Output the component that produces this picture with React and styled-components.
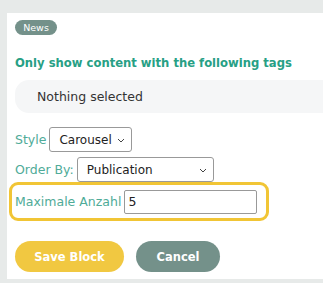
import React from 'react'
import styled, { createGlobalStyle } from 'styled-components'

const Global = createGlobalStyle`
  body {
    margin: 0;
    background: #e7eae9;
    font-family: "DejaVu Sans", "Open Sans", sans-serif;
  }
`

const Page = styled.div`
  padding: 13px 0 4px 7px;
  width: 323px;
  height: 283px;
  box-sizing: border-box;
  overflow: hidden;
`

const Card = styled.div`
  background: #fff;
  width: 340px;
  height: 266px;
  padding: 7px 0 0 8px;
  box-sizing: border-box;
`

const Badge = styled.div`
  background: #74918a;
  color: #fff;
  font-size: 9.5px;
  line-height: 15px;
  height: 15px;
  width: 42px;
  text-align: center;
  border-radius: 8px;
`

const Heading = styled.h3`
  margin: 20px 0 0;
  color: #27a085;
  font-size: 11.6px;
  font-weight: bold;
  line-height: 16px;
`

const TagBox = styled.div`
  margin-top: 9px;
  height: 33px;
  background: #f5f6f7;
  border-radius: 14px;
  padding-left: 22px;
  display: flex;
  align-items: center;
  font-size: 12.5px;
  color: #333;
`

const Row = styled.div`
  display: flex;
  align-items: center;
  gap: 3px;
  margin-top: ${p => p.$top || 0}px;
`

const Label = styled.label`
  color: #4fab98;
  font-size: 12.5px;
`

const Select = styled.div`
  position: relative;
  width: ${p => p.$w}px;
  height: 25px;
  box-sizing: border-box;
  border: 1px solid #999;
  border-radius: 3px;
  padding-left: 9px;
  display: flex;
  align-items: center;
  font-size: 12px;
  color: #222;
  svg {
    position: absolute;
    right: 6px;
    top: 10px;
  }
`

const Highlight = styled.div`
  margin: 0 0 0 -6px;
  width: 260px;
  height: 39px;
  box-sizing: border-box;
  border: 3px solid #f1c535;
  border-radius: 9px;
  padding-left: 3px;
  display: flex;
  align-items: center;
  gap: 3px;
`

const Input = styled.div`
  width: 133px;
  height: 24px;
  box-sizing: border-box;
  border: 1px solid #999;
  border-radius: 2px;
  padding-left: 3px;
  display: flex;
  align-items: center;
  font-size: 12.5px;
  color: #222;
`

const Buttons = styled.div`
  display: flex;
  gap: 12px;
  margin-top: 20px;
`

const Button = styled.button`
  width: ${p => p.$w}px;
  height: 31px;
  border: none;
  border-radius: 16px;
  background: ${p => p.$bg};
  color: #fff;
  font-family: inherit;
  font-weight: bold;
  font-size: 11.5px;
  padding: 0;
`

const Chevron = () => (
  <svg width="8" height="5" viewBox="0 0 8 5">
    <path d="M1 1l3 3 3-3" stroke="#444" strokeWidth="1" fill="none" />
  </svg>
)

export default function App() {
  return (
    <Page>
      <Global />
      <Card>
        <Badge>News</Badge>
        <Heading>Only show content with the following tags</Heading>
        <TagBox>Nothing selected</TagBox>
        <Row $top={14}>
          <Label>Style</Label>
          <Select $w={83}>Carousel<Chevron /></Select>
        </Row>
        <Row $top={5}>
          <Label>Order By:</Label>
          <Select $w={137}>Publication<Chevron /></Select>
        </Row>
        <Highlight>
          <Label>Maximale Anzahl</Label>
          <Input>5</Input>
        </Highlight>
        <Buttons>
          <Button $w={109} $bg="#f1c841">Save Block</Button>
          <Button $w={84} $bg="#74918a">Cancel</Button>
        </Buttons>
      </Card>
    </Page>
  )
}
